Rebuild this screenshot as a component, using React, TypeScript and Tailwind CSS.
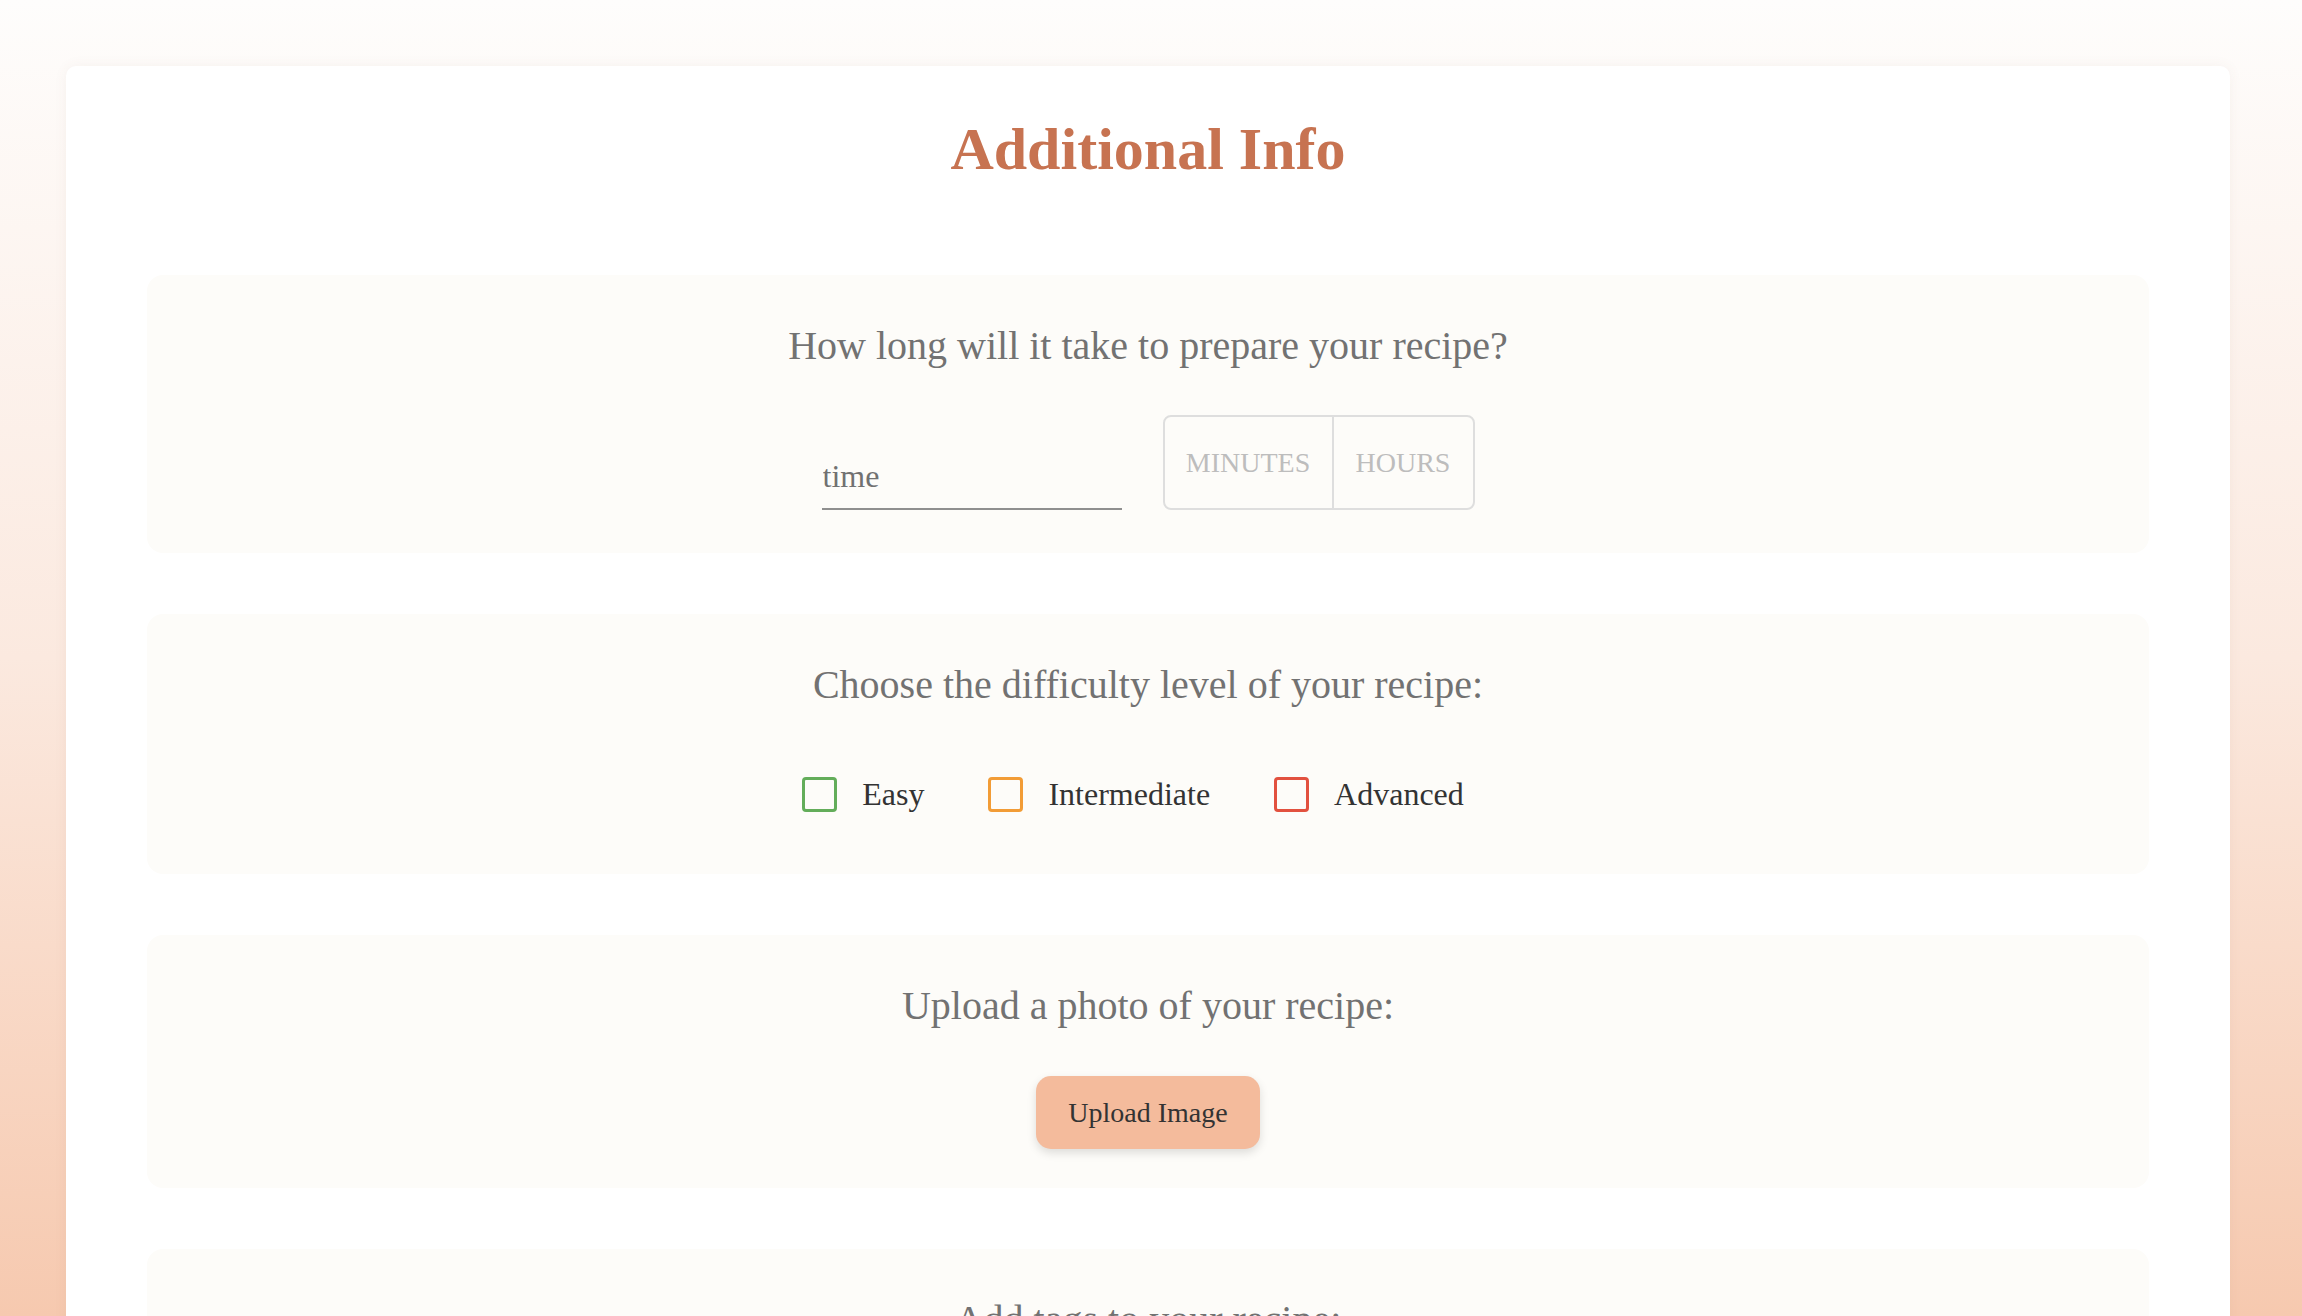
import { useState } from "react";

type Level = "easy" | "intermediate" | "advanced";

const levels: { id: Level; label: string; border: string }[] = [
  { id: "easy", label: "Easy", border: "border-[#63ad5a]" },
  { id: "intermediate", label: "Intermediate", border: "border-[#f29c36]" },
  { id: "advanced", label: "Advanced", border: "border-[#e2513f]" },
];

function Section({
  title,
  pb = "pb-[41px]",
  children,
}: {
  title: string;
  pb?: string;
  children?: React.ReactNode;
}) {
  return (
    <section className={`mb-[61px] flex flex-col items-center rounded-2xl bg-[#fdfcf9] px-8 pt-[48px] ${pb}`}>
      <h3 className="text-[40px] leading-[46px] text-[#727272]">{title}</h3>
      {children}
    </section>
  );
}

export default function App() {
  const [unit, setUnit] = useState<"minutes" | "hours" | null>(null);
  const [level, setLevel] = useState<Level | null>(null);

  return (
    <div className="min-h-screen bg-fixed bg-gradient-to-b from-[#fefdfc] via-[#fbe9df] to-[#f6c9af] pl-[66px] pr-[72px] pt-[66px] font-['Liberation_Serif',serif]">
      <div className="rounded-[10px] bg-white px-[81px] pt-[49px] pb-10 shadow-[0_0_14px_rgba(120,80,60,0.06)]">
        <h1 className="mb-[91px] text-center text-[60px] font-bold leading-[69px] text-[#c77351]">
          Additional Info
        </h1>

        {/* Prep time */}
        <Section title="How long will it take to prepare your recipe?" pb="pb-[43px]">
          <div className="mt-[46px] flex items-end gap-[41px]">
            <input
              type="text"
              placeholder="time"
              className="w-[300px] border-b-2 border-[#8f8f8f] bg-transparent pb-[13px] pl-px text-[32px] leading-[37px] text-[#444] outline-none placeholder:text-[#717171]"
            />
            <div className="flex h-[95px] overflow-hidden rounded-lg border-2 border-[#dedede]">
              <button
                onClick={() => setUnit("minutes")}
                className={`w-[169px] border-r-2 border-[#dedede] text-[28px] ${unit === "minutes" ? "bg-[#f4bb9c] text-[#333]" : "text-[#bdbdbd]"}`}
              >
                MINUTES
              </button>
              <button
                onClick={() => setUnit("hours")}
                className={`w-[139px] text-[28px] ${unit === "hours" ? "bg-[#f4bb9c] text-[#333]" : "text-[#bdbdbd]"}`}
              >
                HOURS
              </button>
            </div>
          </div>
        </Section>

        {/* Difficulty */}
        <Section title="Choose the difficulty level of your recipe:">
          <div className="mt-[46px] flex gap-[64px] pt-[22px] pb-[20px] pr-[30px]">
            {levels.map((l) => (
              <label key={l.id} className="flex cursor-pointer items-center gap-[25px]">
                <span
                  onClick={() => setLevel(l.id)}
                  className={`h-[35px] w-[35px] rounded-[4px] border-[3px] ${l.border} ${level === l.id ? "bg-[#fbe9df]" : ""}`}
                />
                <span className="text-[32px] leading-[37px] text-[#333]">{l.label}</span>
              </label>
            ))}
          </div>
        </Section>

        {/* Photo */}
        <Section title="Upload a photo of your recipe:" pb="pb-[39px]">
          <button className="mt-[47px] h-[73px] w-[224px] rounded-[15px] bg-[#f4bb9c] text-[28px] text-[#333] shadow-[0_4px_10px_rgba(0,0,0,0.13)]">
            Upload Image
          </button>
        </Section>

        {/* Tags */}
        <Section title="Add tags to your recipe:">
          <div className="mt-[46px] flex items-end gap-[41px]">
            <input
              type="text"
              placeholder="tag"
              className="w-[300px] border-b-2 border-[#8f8f8f] bg-transparent pb-[13px] text-[32px] leading-[37px] outline-none placeholder:text-[#717171]"
            />
            <button className="h-[73px] rounded-[15px] bg-[#f4bb9c] px-[33px] text-[28px] text-[#333]">
              Add
            </button>
          </div>
        </Section>
      </div>
    </div>
  );
}
